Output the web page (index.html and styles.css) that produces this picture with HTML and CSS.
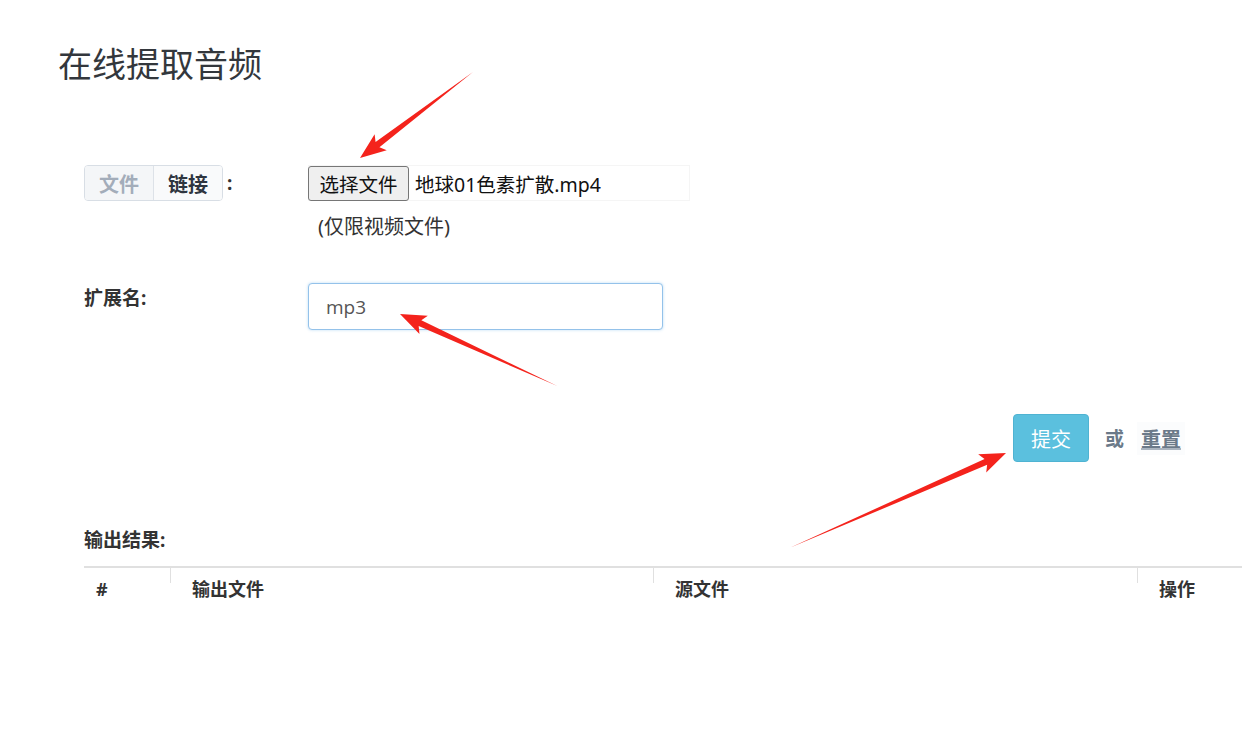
FILE: index.html
```html
<!DOCTYPE html>
<html lang="zh-CN">
<head>
<meta charset="utf-8">
<title>在线提取音频</title>
<link rel="stylesheet" href="styles.css">
</head>
<body>
<div class="page">
  <h1 class="title">在线提取音频</h1>

  <form class="form">
    <div class="row row-file">
      <div class="label">
        <div class="tabs">
          <span class="tab tab-muted">文件</span>
          <span class="tab tab-active">链接</span>
        </div>
        <span class="colon">:</span>
      </div>
      <div class="field">
        <div class="file">
          <button type="button" class="file-btn">选择文件</button>
          <span class="file-name">地球01色素扩散.mp4</span>
        </div>
        <div class="hint">(仅限视频文件)</div>
      </div>
    </div>

    <div class="row row-ext">
      <div class="label label-text">扩展名:</div>
      <div class="field">
        <input class="text-input" type="text" value="mp3">
      </div>
    </div>

    <div class="actions">
      <button type="button" class="btn-submit">提交</button>
      <span class="or">或</span>
      <a class="reset">重置</a>
    </div>
  </form>

  <section class="output">
    <div class="output-title">输出结果:</div>
    <table class="table">
      <thead>
        <tr>
          <th class="c-num">#</th>
          <th class="c-out">输出文件</th>
          <th class="c-src">源文件</th>
          <th class="c-op">操作</th>
        </tr>
      </thead>
    </table>
  </section>

  <svg class="arrows" width="1242" height="733" viewBox="0 0 1242 733">
    <g fill="#f4231c">
      <polygon transform="translate(360,158) rotate(142.7)" points="-142,0 -22,-3.2 -26,-10 0,0 -26,10 -22,3.2"/>
      <polygon transform="translate(400,314) rotate(-155.4)" points="-173,0 -22,-3.2 -26,-10 0,0 -26,10 -22,3.2"/>
      <polygon transform="translate(1006,453) rotate(-23.7)" points="-236,0 -22,-3.2 -26,-10 0,0 -26,10 -22,3.2"/>
    </g>
  </svg>
</div>
</body>
</html>
```
FILE: styles.css
```css
html, body {
  margin: 0;
  padding: 0;
  background: #fff;
  overflow: hidden;
}
body {
  font-family: "Noto Sans", "Noto Sans CJK SC", sans-serif;
  color: #333;
  width: 1242px;
  height: 733px;
}
.page {
  position: relative;
  width: 1242px;
  height: 733px;
  padding: 0;
}
.title {
  margin: 0;
  padding: 40px 0 0 58px;
  font-size: 34px;
  line-height: 48px;
  font-weight: 400;
  color: #33373c;
}
.form {
  margin-top: 77px;
  padding-left: 84px;
}
.row {
  display: grid;
  grid-template-columns: 224px 1fr;
}
.label {
  display: flex;
  align-items: center;
  height: 36px;
}
.tabs {
  display: flex;
  border: 1px solid #d8dee5;
  border-radius: 4px;
  height: 34px;
  overflow: hidden;
}
.tab {
  display: flex;
  align-items: center;
  padding: 0 14px;
  font-size: 20px;
  font-weight: 700;
}
.tab-muted {
  background: #f4f6f8;
  color: #a3adba;
  border-right: 1px solid #dde2e8;
}
.tab-active {
  background: #f9fafb;
  color: #2f3640;
}
.colon {
  margin-left: 4px;
  font-size: 19px;
  font-weight: 700;
  color: #333;
}
.file {
  display: flex;
  align-items: center;
  width: 382px;
  height: 36px;
  border: 1px solid #f5f5f5;
  box-sizing: border-box;
}
.file-btn {
  height: 35px;
  width: 101px;
  margin-left: -1px;
  padding: 0;
  font-family: "Noto Sans CJK SC", sans-serif;
  font-size: 19.5px;
  color: #111;
  background: #efefef;
  border: 1px solid #767676;
  border-radius: 3px;
}
.file-name {
  margin-left: 6px;
  font-size: 19.5px;
  color: #111;
}
.hint {
  margin-top: 10px;
  padding-left: 10px;
  font-size: 20px;
  line-height: 32px;
  color: #333;
}
.row-ext {
  margin-top: 40px;
}
.label-text {
  align-items: flex-start;
  height: auto;
  padding-top: 2px;
  font-size: 19px;
  font-weight: 700;
  line-height: 26px;
  color: #333;
}
.text-input {
  width: 355px;
  height: 47px;
  box-sizing: border-box;
  padding: 0 17px;
  font-family: "Open Sans", "Noto Sans", sans-serif;
  font-size: 19px;
  color: #555;
  border: 1px solid #94c2ea;
  border-radius: 4px;
  box-shadow: 0 0 3px rgba(102, 175, 233, 0.45);
  outline: none;
}
.actions {
  display: flex;
  justify-content: flex-end;
  align-items: center;
  margin-top: 84px;
  padding-right: 57px;
}
.btn-submit {
  width: 76px;
  height: 48px;
  background: #5bc0de;
  color: #fff;
  border: 1px solid #4fb3d2;
  border-radius: 4px;
  font-family: "Noto Sans CJK SC", sans-serif;
  font-size: 20px;
}
.or {
  margin-left: 16px;
  font-size: 19px;
  font-weight: 700;
  color: #6b7a89;
}
.reset {
  margin-left: 13px;
  padding: 2px 4px;
  font-size: 20px;
  font-weight: 700;
  color: #6b7a89;
  background: #fbfcfd;
  text-decoration: underline;
  text-decoration-color: #aab4bf;
  text-underline-offset: 1px;
}
.output {
  margin-top: 64px;
  padding-left: 84px;
}
.output-title {
  font-size: 19px;
  font-weight: 700;
  line-height: 28px;
  color: #333;
}
.table {
  margin-top: 12px;
  width: 1200px;
  border-collapse: collapse;
  border-top: 2px solid #e0e0e0;
}
.table th {
  position: relative;
  text-align: left;
  font-size: 18px;
  font-weight: 700;
  color: #333;
  padding: 8px 0 0 22px;
  line-height: 26px;
}
.table th + th::before {
  content: "";
  position: absolute;
  left: 0;
  top: 0;
  height: 15px;
  border-left: 1px solid #e0e0e0;
}
.table .c-num { width: 74px; padding-left: 12px; }
.table .c-out { width: 461px; }
.table .c-src { width: 462px; }
.arrows {
  position: absolute;
  left: 0;
  top: 0;
  pointer-events: none;
}
```
